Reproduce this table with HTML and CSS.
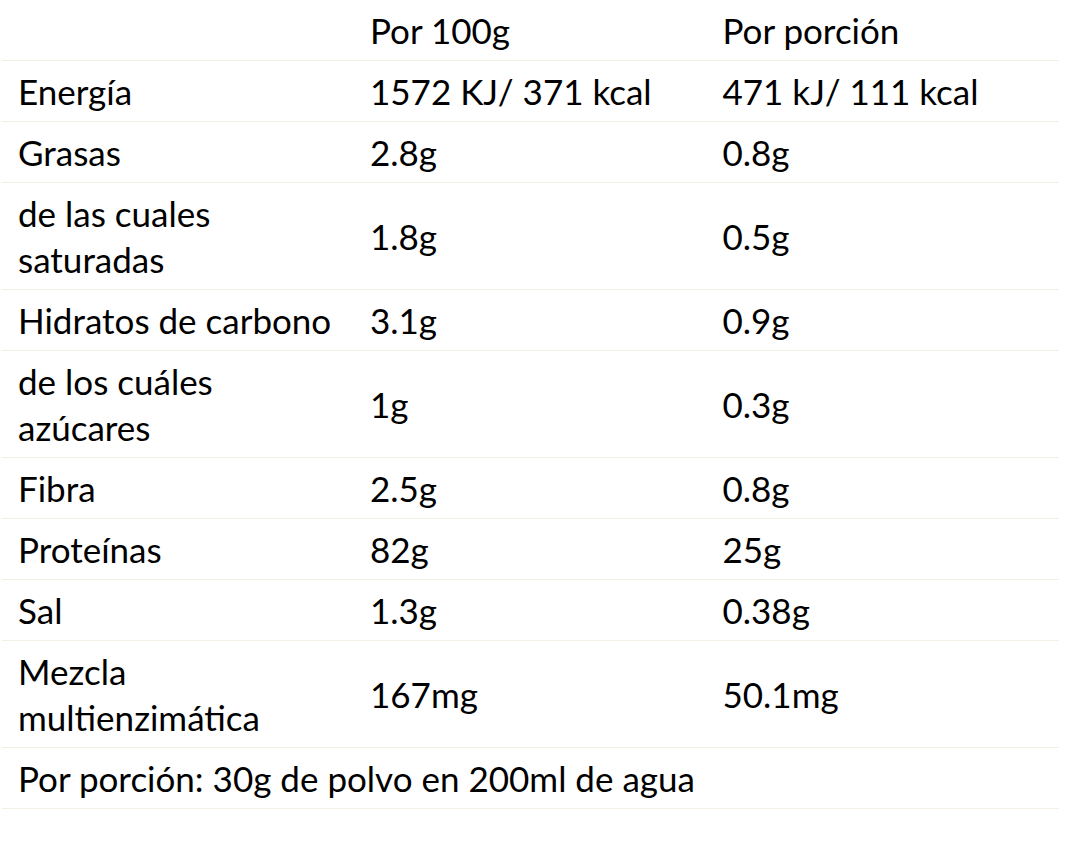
FILE: index.html
```html
<!DOCTYPE html>
<html lang="es">
<head>
<meta charset="utf-8">
<title>Información nutricional</title>
<link rel="stylesheet" href="styles.css">
</head>
<body>
<table class="nutri">
  <thead>
    <tr><th></th><th>Por 100g</th><th>Por porción</th></tr>
  </thead>
  <tbody>
    <tr><td>Energía</td><td>1572 KJ/ 371 kcal</td><td>471 kJ/ 111 kcal</td></tr>
    <tr><td>Grasas</td><td>2.8g</td><td>0.8g</td></tr>
    <tr><td>de las cuales<br>saturadas</td><td>1.8g</td><td>0.5g</td></tr>
    <tr><td>Hidratos de carbono</td><td>3.1g</td><td>0.9g</td></tr>
    <tr><td>de los cuáles<br>azúcares</td><td>1g</td><td>0.3g</td></tr>
    <tr><td>Fibra</td><td>2.5g</td><td>0.8g</td></tr>
    <tr><td>Proteínas</td><td>82g</td><td>25g</td></tr>
    <tr><td>Sal</td><td>1.3g</td><td>0.38g</td></tr>
    <tr><td>Mezcla<br>multienzimática</td><td>167mg</td><td>50.1mg</td></tr>
    <tr><td colspan="3">Por porción: 30g de polvo en 200ml de agua</td></tr>
  </tbody>
</table>
</body>
</html>
```
FILE: styles.css
```css
html, body {
  margin: 0;
  padding: 0;
  background: #ffffff;
}
.nutri {
  margin-left: 2px;
  width: 1057px;
  border-collapse: collapse;
  table-layout: fixed;
  font-family: Lato, "Open Sans", sans-serif;
  font-size: 35px;
  line-height: 46px;
  color: #000000;
}
.nutri th,
.nutri td {
  text-align: left;
  font-weight: normal;
  vertical-align: middle;
  padding: 7px 16px 7px 16px;
  border-bottom: 1px solid #f3efe6;
}
.nutri th:nth-child(1), .nutri td:nth-child(1) { width: 320px; }
```
